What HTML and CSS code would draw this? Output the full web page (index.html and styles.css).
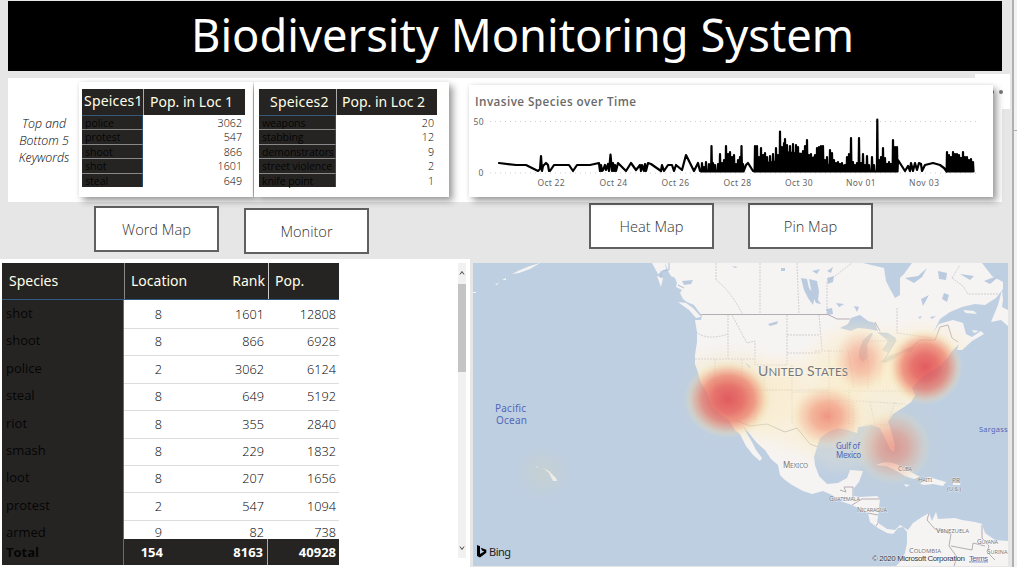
FILE: index.html
```html
<!DOCTYPE html>
<html lang="en">
<head>
<meta charset="utf-8">
<title>Biodiversity Monitoring System</title>
<link rel="stylesheet" href="styles.css">
</head>
<body>
<div class="page">
<main class="report">
  <header class="title"><h1>Biodiversity Monitoring System</h1></header>
  <section class="band">
    <div class="options"><i></i><i></i></div>
    <p class="note">Top and<br>Bottom 5<br>Keywords</p>
    <div class="card card-one">
      <div class="mini mini-one">
        <div class="mh"><b>Speices1</b><b>Pop. in Loc 1</b></div>
        <div class="mr"><span>police</span><em>3062</em></div>
        <div class="mr"><span>protest</span><em>547</em></div>
        <div class="mr"><span>shoot</span><em>866</em></div>
        <div class="mr"><span>shot</span><em>1601</em></div>
        <div class="mr"><span>steal</span><em>649</em></div>
      </div>
    </div>
    <div class="card card-two">
      <div class="mini mini-two">
        <div class="mh"><b>Speices2</b><b>Pop. in Loc 2</b></div>
        <div class="mr"><span>weapons</span><em>20</em></div>
        <div class="mr"><span>stabbing</span><em>12</em></div>
        <div class="mr"><span>demonstrators</span><em>9</em></div>
        <div class="mr"><span>street violence</span><em>2</em></div>
        <div class="mr"><span>knife point</span><em>1</em></div>
      </div>
    </div>
    <div class="card card-chart">
      <svg class="chart" viewBox="469 85 524 112">
        <text class="chart-title" x="475" y="105.500" textLength="161">Invasive Species over Time</text>
        <g class="axis">
          <text x="473.5" y="125" textLength="10">50</text>
          <text x="478.5" y="176">0</text>
          <text x="537.5" y="186" textLength="27">Oct 22</text>
          <text x="599.5" y="186" textLength="27.500">Oct 24</text>
          <text x="661.500" y="186" textLength="27.500">Oct 26</text>
          <text x="723.500" y="186" textLength="27.500">Oct 28</text>
          <text x="785" y="186" textLength="27.500">Oct 30</text>
          <text x="846" y="186" textLength="29.500">Nov 01</text>
          <text x="909" y="186" textLength="30">Nov 03</text>
        </g>
        <path class="gridline" d="M490 121.500H979M490 173H979"/>
        <path class="series" id="series"/>
        <path class="dense" d="M779 172V157L785 151 803 153 808 158 822 154 826 164 856 165 858 172ZM755 172V164L779 160V172ZM876 172V163H897V172ZM947 172V158L958 156 971 161 973 172ZM720 172V166H742V172Z"/>
      </svg>
    </div>
  </section>
  <nav class="buttons">
    <button class="b1">Word Map</button><button class="b2">Monitor</button><button class="b3">Heat Map</button><button class="b4">Pin Map</button>
  </nav>
  <section class="lower">
    <div class="panel">
      <div class="table">
        <div class="row head"><b>Species</b><b>Location</b><b>Rank</b><b>Pop.</b></div>
        <div class="rows">
          <div class="row"><span>shot</span><i>8</i><i>1601</i><i>12808</i></div>
          <div class="row"><span>shoot</span><i>8</i><i>866</i><i>6928</i></div>
          <div class="row"><span>police</span><i>2</i><i>3062</i><i>6124</i></div>
          <div class="row"><span>steal</span><i>8</i><i>649</i><i>5192</i></div>
          <div class="row"><span>riot</span><i>8</i><i>355</i><i>2840</i></div>
          <div class="row"><span>smash</span><i>8</i><i>229</i><i>1832</i></div>
          <div class="row"><span>loot</span><i>8</i><i>207</i><i>1656</i></div>
          <div class="row"><span>protest</span><i>2</i><i>547</i><i>1094</i></div>
          <div class="row last"><span>armed</span><i>9</i><i>82</i><i>738</i></div>
        </div>
        <div class="row total"><span>Total</span><i>154</i><i>8163</i><i>40928</i></div>
      </div>
      <div class="scroll">
        <svg viewBox="0 0 8 21"><path d="M2 11.500L4 8.500L6 11.500"/></svg>
        <div class="thumb"></div>
        <svg viewBox="0 0 8 21"><path d="M2 9.500L4 12.500L6 9.500"/></svg>
      </div>
    </div>
    <svg class="map" viewBox="473 263 535 303">
      <defs>
        <radialGradient id="hot"><stop offset="0" stop-color="#df4b52" stop-opacity=".9"/><stop offset=".35" stop-color="#e45a56" stop-opacity=".82"/><stop offset=".6" stop-color="#eb7763" stop-opacity=".7"/><stop offset=".76" stop-color="#f1a07c" stop-opacity=".5"/><stop offset=".88" stop-color="#f0d09c" stop-opacity=".3"/><stop offset="1" stop-color="#f0e4b0" stop-opacity="0"/></radialGradient>
        <radialGradient id="warm"><stop offset="0" stop-color="#ec6a58" stop-opacity=".66"/><stop offset=".4" stop-color="#f08468" stop-opacity=".54"/><stop offset=".7" stop-color="#f4b08a" stop-opacity=".34"/><stop offset=".85" stop-color="#f4d6a4" stop-opacity=".2"/><stop offset="1" stop-color="#f6eab8" stop-opacity="0"/></radialGradient>
        <radialGradient id="haze"><stop offset="0" stop-color="#fbe9c4" stop-opacity=".5"/><stop offset=".65" stop-color="#fbecc4" stop-opacity=".38"/><stop offset="1" stop-color="#fbf0d0" stop-opacity="0"/></radialGradient>
        <radialGradient id="faint"><stop offset="0" stop-color="#d0d2b4" stop-opacity=".36"/><stop offset="1" stop-color="#d0d2b4" stop-opacity="0"/></radialGradient>
        <clipPath id="mainland"><use href="#land"/></clipPath>
      </defs>
      <rect x="473" y="263" width="535" height="303" fill="#bfcfe2"/>
      <g fill="#f6f3f3">
        <path id="land" d="M665 263L668 271 671 276 675 278 677 283 676 287 682 290 680 293 683 299 687 302 694 305 699 312 702 315 701 320 695 320 697 332 697 342 695 355 695 364 698 372 701 383 706 390 712 407 721 415 729 420 735 430 740 434 746 446 753 455 760 461 762 458 756 450 752 442 746 432 743 426 749 433 757 443 765 450 771 459 778 465 780 475 785 480 792 485 803 491 812 494 823 491 832 495 843 502 852 505 862 510 868 513 870 522 878 528 887 533 893 534 898 528 903 527 907 532 907 543 905 553 902 560 896 566H1008V541L995 540 985 533 982 524 975 522 962 520 955 518 938 519 936 512 932 521 929 513 922 517 913 523 908 530 900 525 895 530 887 529 881 525 877 522 878 517 879 507 880 499 877 496 860 497 853 496 854 488 859 482 863 471 850 470 847 478 838 483 827 484 819 476 815 465 814 457 817 447 820 438 828 432 838 428 848 430 857 433 858 427 872 425 880 428 885 438 890 449 894 452 895 445 891 431 888 422 893 414 904 407 911 402 915 395 912 388 917 382 925 375 932 371 941 365 948 357 952 351 959 344 957 350 962 350 972 341 984 334 981 331 972 337 966 334 963 323 953 320 939 324 933 333 940 319 950 312 962 307 975 304 985 305 996 298 1003 289 1003 282 992 276 982 263H912L904 274 900 278 900 295 895 298 890 289 886 281 884 268 863 263Z"/>
        <path d="M678 302L686 303 693 308 701 317 696 318 689 310ZM652 263L665 263 666 269 658 274ZM657 276L663 278 661 287ZM512 274L520 270 530 266 540 263 530 269 519 273ZM502 280L506 278 506 280ZM495 285L499 282 497 285ZM473 292H476V293H473ZM1002 290L998 305 991 322 1001 320 1008 326V310L1002 307 1003 300Z"/>
        <path d="M876 465Q888 459 900 466L920 477 914 479 905 476 893 469 886 466ZM920 484L929 477 946 482 943 486 933 484 924 485ZM953 483H960V485H953ZM904 484L910 485 906 487ZM536 466L538 467 537 468ZM543 468L549 471 556 478 557 481 553 481 549 473Z"/>
        <path d="M963 310L974 311 977 314 966 313ZM972 330L979 331 974 333Z"/>
      </g>
      <g fill="#bacbe0">
        <path d="M840 328L848 324 851 318 860 315 868 321 875 323 878 331 868 329 858 328 851 331ZM859 351L863 340 871 333 873 334 867 345 868 358 863 362 859 357ZM877 332L888 333 896 338 894 345 888 353 882 350 888 341 882 336ZM880 362L888 356 900 352 896 358 886 363ZM899 353L906 348 914 347 911 352ZM801 278L807 279 809 288 815 296 813 305 808 298 804 290ZM809 279L817 281 819 291 818 300 821 304 816 303 812 294ZM826 309L832 308 833 314 828 315ZM836 303L844 304 839 307ZM854 306L859 307 857 312ZM905 278L918 276 927 268 922 277 914 283ZM938 271L947 273 946 280 939 279ZM921 299L929 295 923 306ZM944 293L949 295 947 302 942 299ZM960 274L974 276 970 280ZM984 281L1002 274 990 284ZM918 317L922 316 920 319ZM930 317L936 316 932 319ZM827 278L834 276 833 282 828 284ZM812 271L820 269 817 274ZM827 271L833 267 831 273ZM781 268H785V271H781ZM768 324L778 321 777 324 770 326ZM745 362L751 367 749 368ZM682 281L693 280 691 284 684 285ZM732 266L738 267 735 268Z"/>
        <path d="M661 278V271M669 263V270L662 271M678 285L684 288" fill="none" stroke="#adbfd4"/>
      </g>
      <g clip-path="url(#mainland)" fill="none">
        <path class="border" d="M701 314.500H828L837 319 850 319M875 322L880 331M896 340L883 362 900 354 912 347 920 340H935L940 327 948 325 952 338 958 342M735 420L750 426 767 424 785 432 797 428 810 444 818 447M840 490L846 492 844 487 853 487 853 498M852 505L862 499 880 499M868 513L878 515M880 520L876 526M929 513L927 520 935 529 951 534 949 546 957 557 954 566M982 525L982 538 989 546 987 552 995 560M951 546L972 550 973 543 985 546M933 477V485"/>
        <path class="state" d="M696 332Q707 341 728 334M728 315V359M695 359H755M715 359V387L739 415M742 359V392M732 315L740 330 747 343 755 341V365H787M760 263V314M716 263V280Q730 290 743 315M797 263L799 314M827 314V282L852 263M787 315V365M787 335H820M787 353H821M819 315L822 350M815 351H843M764 365V390H792M792 365V424M715 390H829M792 392H829M829 350V401H858L905 404M829 370H849M848 350L854 388M868 360V389M880 362V385M843 391L912 391M849 389V424M853 402V430M870 402L875 424M865 425H888M895 402L889 420M897 308V333M897 333L932 338M952 278L963 286 968 294H1003M952 278L960 265M868 341H897M755 400V424M829 401V426M739 392H715"/>
      </g>
      <g clip-path="url(#mainland)">
        <ellipse cx="735" cy="395" rx="85" ry="52" fill="url(#haze)"/>
        <ellipse cx="826" cy="405" rx="112" ry="60" fill="url(#haze)"/>
        <ellipse cx="860" cy="360" rx="60" ry="44" fill="url(#haze)"/>
        <ellipse cx="925" cy="365" rx="62" ry="50" fill="url(#haze)"/>
      </g>
      <g opacity=".6"><circle cx="725" cy="394" r="54" fill="url(#faint)"/><circle cx="890" cy="442" r="57" fill="url(#faint)"/><circle cx="840" cy="425" r="52" fill="url(#haze)"/></g>
      <ellipse cx="728" cy="399" rx="44" ry="39" fill="url(#hot)"/>
      <circle cx="925" cy="367" r="38" fill="url(#hot)"/>
      <ellipse cx="861" cy="360" rx="30" ry="34" fill="url(#warm)" opacity=".72"/>
      <ellipse cx="827" cy="416" rx="38" ry="33" fill="url(#warm)"/>
      <circle cx="893" cy="447" r="38" fill="url(#warm)" opacity=".85"/>
      <circle cx="543" cy="473" r="29" fill="url(#faint)"/>
      <g class="country">
        <text x="758" y="376" font-size="14" textLength="90" class="us">U<tspan font-size="11.500">NITED</tspan> S<tspan font-size="11.500">TATES</tspan></text>
        <text x="783" y="468" font-size="8" textLength="25">M<tspan font-size="6.500">EXICO</tspan></text>
        <text x="829" y="501" font-size="6.500" textLength="31">G<tspan font-size="5.500">UATEMALA</tspan></text>
        <text x="857" y="512" font-size="6.500" textLength="30">N<tspan font-size="5.500">ICARAGUA</tspan></text>
        <text x="898" y="471" font-size="7" textLength="14">C<tspan font-size="5.500">UBA</tspan></text>
        <text x="918" y="482" font-size="6.500" textLength="14">H<tspan font-size="5.500">AITI</tspan></text>
        <text x="952" y="483" font-size="6.500">PR</text><text x="947" y="490.500" font-size="6" textLength="14">(U.S.)</text>
        <text x="936" y="533" font-size="7.500" textLength="33">V<tspan font-size="6">ENEZUELA</tspan></text>
        <text x="909" y="553" font-size="7.500" textLength="32">C<tspan font-size="6">OLOMBIA</tspan></text>
        <text x="977" y="544" font-size="6.500" textLength="21">G<tspan font-size="5.500">UYANA</tspan></text>
        <text x="987" y="554" font-size="6.500" textLength="20.500">S<tspan font-size="5.500">URINA</tspan></text>
      </g>
      <g class="sea">
        <text x="495" y="412" font-size="10" textLength="31">Pacific</text><text x="496" y="424" font-size="10" textLength="31">Ocean</text>
        <text x="836" y="449" font-size="8" textLength="24">Gulf of</text><text x="836" y="458" font-size="8" textLength="25">Mexico</text>
        <text x="979" y="432" font-size="7.500" textLength="28.500">Sargass</text>
      </g>
      <path d="M477 545L480 546.200V554L484.200 551.500 482 550.400 480.800 547.800 486.300 549.800V552.800L480 557.500 477 556Z"/>
      <text class="bing" x="489" y="555.500" textLength="22">Bing</text>
      <text class="legal" x="872" y="560.500" textLength="93">© 2020 Microsoft Corporation</text>
      <text class="legal terms" x="969" y="560.500" textLength="19">Terms</text>
    </svg>
  </section>
</main>
<aside class="edge"></aside>
</div>
<script src="chart.js"></script>
</body>
</html>
```
FILE: styles.css
```css
* { box-sizing: border-box; }
body { margin: 0; width: 1017px; height: 567px; overflow: hidden; background: #e6e6e6; font-family: "Noto Sans", "Open Sans", sans-serif; color: #333; }
.page { display: flex; height: 567px; }
.report { width: 1012px; flex: none; padding-top: 1px; }
.edge { width: 5px; border-left: 2px solid #b0b0b0; background: linear-gradient(#b0b0b0, #b0b0b0) 0 130px / 5px 1px no-repeat, #f2f2f2; }
.title { width: 994px; height: 70px; margin-left: 8px; background: #000; }
.title h1 { margin: 0; padding-left: 183px; font-size: 45.250px; line-height: 68px; font-weight: 400; color: #fff; white-space: nowrap; }
.band { position: relative; display: flex; width: 994px; height: 124px; margin: 7px 0 0 8px; background: #fff; }
.options { position: absolute; top: -4px; right: -8px; width: 35px; height: 35px; background: #fff; display: flex; gap: 5px; padding: 16px 0 0 15px; }
.options i { width: 4px; height: 4px; border-radius: 2px; background: #777; }
.note { width: 71px; margin: 37px 0 0; font: italic 300 12.300px/17px "Open Sans", sans-serif; text-align: center; color: #000; padding-left: 1px; }
.card { position: relative; background: #fff; box-shadow: 4px 4px 7px rgba(0,0,0,.38), 0 0 4px rgba(0,0,0,.08); }
.card-one { width: 174px; height: 115px; margin-top: 4px; padding: 7px 0 0 3px; }
.card-two { width: 195px; height: 115px; margin: 4px 0 0 1px; padding: 7px 0 0 5px; }
.card-chart { width: 524px; height: 112px; margin: 7px 0 0 20px; }
.mini-one { width: 163px; --first: 61px; }
.mini-two { width: 178px; --first: 77px; }
.mh { display: flex; height: 26px; background: #252423; font-size: 14px; line-height: 26px; color: #ffffe8; white-space: nowrap; }
.mh b { font-weight: 400; padding-left: 6px; }
.mh b:first-child { width: calc(var(--first) + 1px); padding-left: 2px; line-height: 24px; border-right: 1px solid #aaa; letter-spacing: .2px; }
.mini-two .mh b:first-child { padding-left: 11px; line-height: 26px; }
.mini-two .mh b:last-child { padding-left: 5px; }
.mr { display: flex; height: 14.400px; font: 300 10.700px/15px "Open Sans", sans-serif; }
.mr span { width: var(--first); padding-left: 3px; background: #252423; color: #050505; font-size: 10.500px; font-weight: 400; border-top: 1px solid #888; border-right: 1px solid #294d70; white-space: nowrap; line-height: 15px; }
.mr:nth-child(2) span { border-top-color: #355977; }
.mini-two .mr span { letter-spacing: -.1px; }
.mr em { flex: 1; text-align: right; padding-right: 3px; font-style: normal; line-height: 17px; color: #000; }
.chart { display: block; width: 524px; height: 112px; }
.chart text { font-family: "Noto Sans", sans-serif; }
.chart .chart-title { font: 600 11.700px "Open Sans", sans-serif; fill: #6a6a6a; }
.axis { font-size: 8.500px; fill: #666; }
.gridline { stroke: #ccc; stroke-dasharray: 1 4; fill: none; }
.series { fill: none; stroke: #000; stroke-width: 2.200; stroke-linejoin: round; stroke-linecap: round; }
.dense { fill: #000; }
.buttons { display: flex; height: 57px; align-items: flex-start; }
.buttons button { width: 125px; height: 46px; padding: 0; border: 2px solid #606060; background: #fff; color: #333; font: 300 14.600px "Open Sans", sans-serif; }
.b1 { margin: 4px 0 0 94px; } .b2 { margin: 6px 0 0 25px; } .b3 { margin: 1px 0 0 220px; } .b4 { margin: 1px 0 0 34px; }
.lower { display: flex; height: 308px; }
.panel { width: 470px; height: 308px; background: #fff; padding: 4px 4px 0 2px; display: flex; justify-content: space-between; }
.table { width: 337px; height: 302px; }
.row { display: grid; grid-template-columns: 122px 38px 102px 75px; height: 27.400px; font: 300 12.700px/28px "Open Sans", sans-serif; color: #000; }
.rows { height: 239px; overflow: hidden; }
.row i { font-style: normal; text-align: right; border-bottom: 1px solid #ddd; }
.row i:last-child { padding-right: 3px; }
.row span { padding-left: 4px; font-size: 13px; font-weight: 400; line-height: 27px; color: #050505; background: #252423; border-right: 1px solid #3977b5; border-bottom: 1px solid #bbb; }
.row.last { height: 20px; }
.row.last span, .row.last i { height: 20px; line-height: 26px; border-bottom: 0; }
.row.head { height: 37px; grid-template-columns: 122px 80px 64px 71px; background: #252423; color: #ffffe8; font: 14px/36px "Noto Sans", sans-serif; border-bottom: 1px solid #2c5a85; }
.head b { font-weight: 400; padding-left: 7px; }
.head b:nth-child(2) { border-left: 1px solid #888; padding-left: 6px; }
.head b:nth-child(3) { text-align: right; padding: 0 3px 0 0; border-right: 1px solid #ccc; width: 65px; }
.row.total { height: 26px; background: #252423; color: #fff; font-weight: 700; font-size: 13px; line-height: 26px; }
.row.total i, .row.total span { border-bottom: 0; line-height: 26px; font-weight: 700; }
.row.total i:nth-child(2) { width: 39px; }
.row.total i:nth-child(3) { border-right: 1px solid #aaa; padding-right: 4px; width: 106px; }
.scroll { width: 8px; height: 295px; background: #f1f1f1; display: flex; flex-direction: column; }
.scroll svg { width: 8px; height: 21px; flex: none; fill: none; stroke: #444; }
.thumb { height: 88px; background: #c4c4c4; margin-bottom: auto; }
.map { width: 535px; height: 303px; margin: 4px 0 0 3px; flex: none; }
.map text { font-family: "Noto Sans", sans-serif; }
.border { stroke: #b5adb5; stroke-width: 1; }
.state { stroke: #bdb5bd; stroke-width: .600; stroke-dasharray: 2 1; }
.country { fill: #777; stroke: #fff; stroke-width: .800; stroke-opacity: .600; paint-order: stroke; }
.map .us { font-family: Lato, sans-serif; }
.sea { fill: #5267b8; }
.bing { font-size: 11px; fill: #222; }
.map .legal { font: 8px "Liberation Sans", sans-serif; fill: #333; stroke: #fff; stroke-opacity: .500; stroke-width: 1; paint-order: stroke; }
.map .terms { fill: #4964a8; text-decoration: underline; }
```
FILE: chart.js
```js
// Sparse readings, then dense hourly peaks that fall back to the floor.
const start = "M499 163L516 165 526 165 538 171 540 169 541 156 542 171 543 166 546 163 548 165 549 171 550 171 554 165 569 165 573 171 577 165 590 165 599 163 600 171 601 165 602 171 603 170 605 165 606 170 608 164 609 171 610.5 154.5 612 171 613 163 614 171 615 165 616 171 618 163 620 165 626 171 631 163 636 170 640 165 641 171 642 165 644 171 645 164 646 171 648 163 651 164 661 171 662 165 664 171 668 165 672 165 674 171 676 165 682 170 686 155 694 171 698 163 700 171";
const peaks = [702,163,704,167,706,162,709,164,711.5,146,713,163,715,165,718,164,720,154,722,163,724,160,726,146,728,154,730,152,732,157,734,155,736,164,738,160,740,157,741.5,146,743,164];
const busy = [755,146,757,146,759,157,761,148,763,155,765,153,767,157,770,156,773,154,776,148,778,155,780,131.5,782,147,784,143,785,139,787,145,790,146,793,144,796,145,798,147,801,154,803,151,805,146,807,140,809,155,811,154,813,160,815,155,817,148,819,147,821,146,823,146,825,160,827,157,830,150,832,153,834,160,836,163,838,162,840,164,842,163,845,165,847,157,849,154,851,138,853,162,855,165,857,163,859,138,861,163,863,154,865,165,867,156,869,165,872,157,874,165,877.3,119.5,879,160,881,157,883,148,885,158,887,165,889,162,891,166,893,140,895,147,897,147];
const last = [947,152,949,155,951,157,953,152,955,154,957,154,959,155,961,158,963,152,965,157,967,157,969,160,971,159,973,162];
function spikes(values) {
  let out = "";
  for (let i = 0; i < values.length; i += 2) {
    const x = values[i], y = values[i + 1];
    out += `L${x - 0.4} 171.5L${x} ${y}L${x + 0.5} 171.5`;
  }
  return out;
}
document.getElementById("series").setAttribute("d", start + spikes(peaks) + "L746 165 748 163 753 171" + spikes(busy) + "L898 160L905 171L908 166L910 171L911 163L913 171L915 163L917 170L919 163L921 164L922 171L925 165L933 163L940 165L944 168" + spikes(last));
```
